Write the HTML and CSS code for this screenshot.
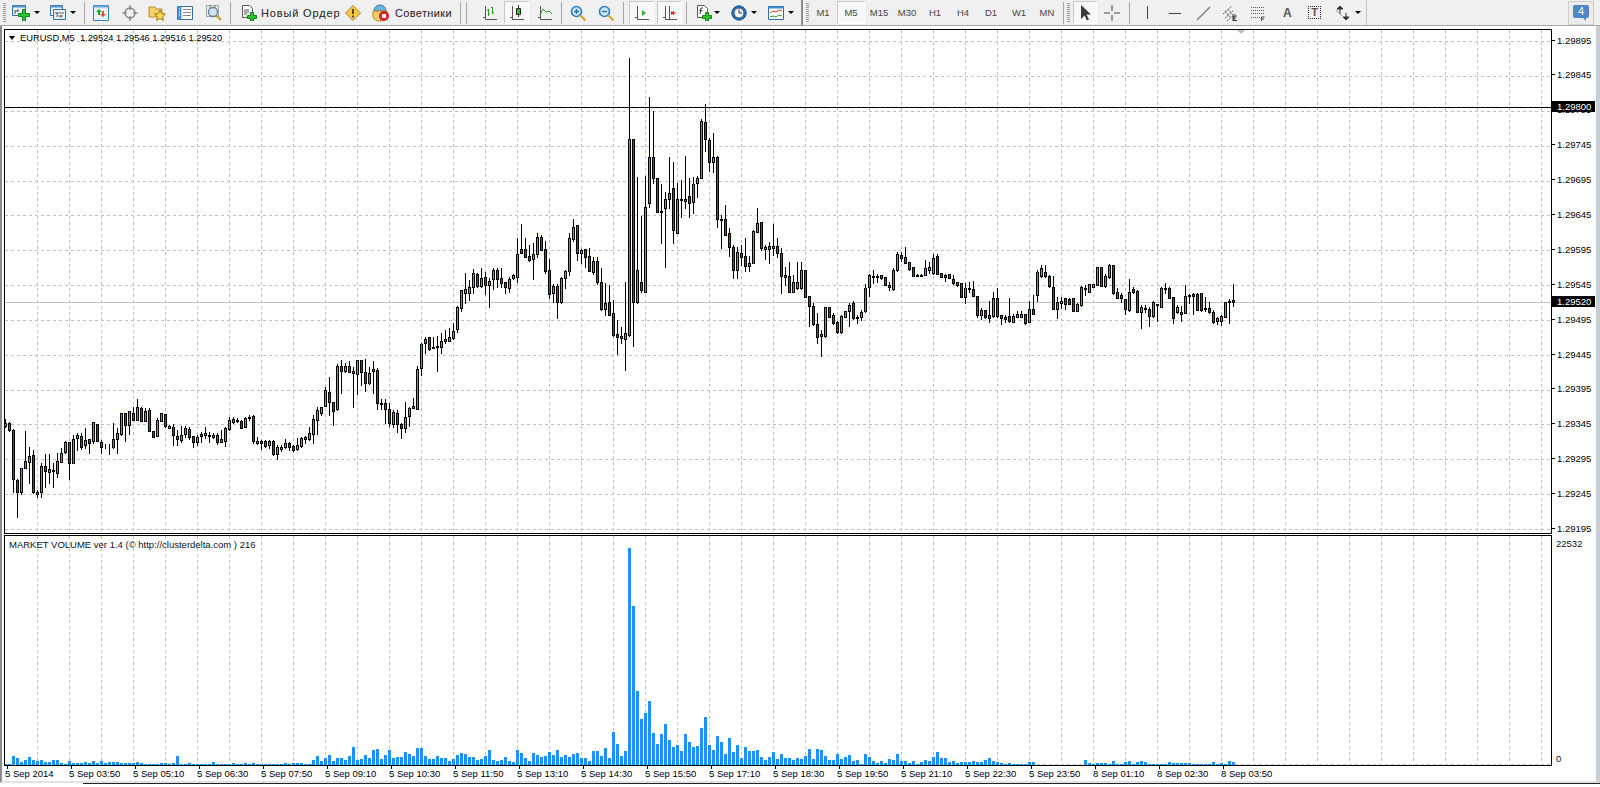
FILE: index.html
```html
<!DOCTYPE html>
<html lang="ru">
<head>
<meta charset="utf-8">
<title>EURUSD,M5</title>
<link rel="stylesheet" href="styles.css">
</head>
<body>
<header class="toolbar">
  <i class="grip at3"></i>
  <svg class="ic ml6" viewBox="0 0 18 18"><path d="M.5 1.500h13v10H.5z" fill="#e8f2fb" stroke="#2f6ea8"/><path d="M.5 1.500h13v2H.5z" fill="#4d94d0"/><path d="M3 6v4M6 5v3M3 7h3" stroke="#555" fill="none"/><path d="M6.500 9.500h4v-4h3v4h4v3h-4v4h-3v-4h-4z" fill="#2fc32f" stroke="#11801a"/></svg>
  <i class="caret ml4"></i>
  <svg class="ic ml9" viewBox="0 0 18 18"><path d="M1.500 1.500h12v10h-12z" fill="#eaf3fb" stroke="#2f6ea8"/><path d="M1.500 1.500h12v2h-12z" fill="#4d94d0"/><path d="M4.500 5.500h12v10h-12z" fill="#eaf3fb" stroke="#2f6ea8"/><path d="M6 9h9M7 12h7M8 8v3M12 11v3" stroke="#666" fill="none"/></svg>
  <i class="caret ml3"></i>
  <i class="sep ml8"></i>
  <svg class="ic16 ml8" viewBox="0 0 16 16"><path d="M.5.500h15v15H.5z" fill="#e6f0fa" stroke="#3a7fbd"/><path d="M.5.500h15v2H.5z" fill="#6aa8dc"/><path d="M6 4l3 3H7v3H5V7H3z" fill="#27a32b"/><path d="M10 12l-3-3h2V6h2v3h2z" fill="#e0522a"/></svg>
  <svg class="ic16 ml13" viewBox="0 0 16 16"><circle cx="8" cy="8" r="5" fill="none" stroke="#8a8a8a" stroke-width="1.500"/><path d="M8 0v5M8 11v5M0 8h5M11 8h5" stroke="#777" stroke-width="1.200"/></svg>
  <svg class="ic18 ml10" viewBox="0 0 18 18"><path d="M1 3h6l1 2h6v8H1z" fill="#f3d36e" stroke="#b58a2a"/><path d="M12 6l1.700 3.500 3.800.5-2.800 2.600.7 3.900-3.400-1.900-3.400 1.900.7-3.900L6.500 10l3.800-.5z" fill="#f7d64a" stroke="#9a7a20"/></svg>
  <svg class="ic16 ml11" viewBox="0 0 16 16"><path d="M.5 1.500h15v13H.5z" fill="#fff" stroke="#2f6ea8"/><path d="M.5 1.500h4v13h-4z" fill="#4d94d0"/><path d="M6 4.500h8M6 7.500h8M6 10.500h8" stroke="#888"/><path d="M2 4h1M2 7h1M2 10h1" stroke="#fff"/></svg>
  <svg class="ic18 ml12" viewBox="0 0 18 18"><path d="M1.500 1.500h12v11h-12z" fill="#eee" stroke="#9aa"/><circle cx="8" cy="8" r="4.500" fill="#cfe3f3" stroke="#6d7f92" stroke-width="1.300"/><path d="M11.500 11.500l4.500 4.500" stroke="#c99b2b" stroke-width="2.200"/><path d="M5 1v3M10 1v3" stroke="#777"/></svg>
  <i class="sep ml7"></i>
  <svg class="ic16 ml10" viewBox="0 0 16 16"><path d="M1.500.5h7l3 3v9h-10z" fill="#fff" stroke="#555"/><path d="M3 5h5M3 7h5M3 9h3" stroke="#555"/><path d="M6.500 10.500h3v-3h3v3h3v3h-3v2.500h-3v-2.500h-3z" fill="#2fc32f" stroke="#11801a"/></svg>
  <span class="tb-label tb-wide ml4 w-order">Новый Ордер</span>
  <svg class="ic16 ml10" viewBox="0 0 16 16"><path d="M8 .5L15.500 8 8 15.500.5 8z" fill="#f6c843" stroke="#a98a3a"/><path d="M8 4v5M8 10.500v2" stroke="#533" stroke-width="1.800"/></svg>
  <svg class="ic18 ml11" viewBox="0 0 18 18"><path d="M2 7c0-4 3-6 6-6s6 2 6 6z" fill="#6fb0de" stroke="#3d7aa8"/><path d="M1 7h14v6c0 2-3 4-7 4s-7-2-7-4z" fill="#f4cf63" stroke="#a98a3a"/><circle cx="12" cy="12" r="5" fill="#d92020"/><rect x="10" y="10" width="4" height="4" fill="#fff"/></svg>
  <span class="tb-label ml5 w-adv">Советники</span>
  <i class="sep ml7"></i><i class="sep ml5"></i>
  <svg class="ic16 ml15" viewBox="0 0 16 16"><path d="M3.500 1v13.500H15M1 12.500h3" stroke="#555" fill="none"/><path d="M6.500 4v7M6 10h1M10.500 2v7M9 2.500h1.500M10.500 8H12" stroke="#2a9a2a" fill="none"/><path d="M6.500 5H5M6.500 9H8" stroke="#2a9a2a"/></svg>
  <span class="press ml6"><svg class="ic16" viewBox="0 0 16 16"><path d="M3.500 1v13.500H15M1 12.500h3" stroke="#555" fill="none"/><path d="M9.500 0v12" stroke="#333"/><path d="M7.500 3.500h4v6h-4z" fill="#2fc32f" stroke="#222"/></svg></span>
  <svg class="ic16 ml8" viewBox="0 0 16 16"><path d="M3.500 1v13.500H15M1 12.500h3" stroke="#555" fill="none"/><path d="M3 10l3-6 3 3 3-1 3 3" stroke="#2a9a2a" fill="none"/></svg>
  <i class="sep ml8"></i>
  <svg class="ic16 ml8" viewBox="0 0 16 16"><circle cx="6.500" cy="6.500" r="5" fill="#cfe6f7" stroke="#2d7fc0" stroke-width="1.600"/><path d="M4 6.500h5M6.500 4v5" stroke="#2b70b0" stroke-width="1.500"/><path d="M10.500 10.500l5 5" stroke="#d6a92d" stroke-width="2.400"/></svg>
  <svg class="ic16 ml12" viewBox="0 0 16 16"><circle cx="6.500" cy="6.500" r="5" fill="#cfe6f7" stroke="#2d7fc0" stroke-width="1.600"/><path d="M4 6.500h5" stroke="#2b70b0" stroke-width="1.500"/><path d="M10.500 10.500l5 5" stroke="#d6a92d" stroke-width="2.400"/></svg>
  <i class="sep ml9"></i>
  <span class="press ml5"><svg class="ic16" viewBox="0 0 16 16"><path d="M3.500 1v13.500H15M1 12.500h3" stroke="#555" fill="none"/><path d="M8 5v6l4-3z" fill="#2fae2f"/></svg></span>
  <span class="press ml3"><svg class="ic16" viewBox="0 0 16 16"><path d="M3.500 1v13.500H15M1 12.500h3M7.500 1v13" stroke="#555" fill="none"/><path d="M14 8H10M11.500 6v4" stroke="#d22" fill="none"/><path d="M9 6l3 2-3 2z" fill="#d22"/></svg></span>
  <i class="sep ml4"></i>
  <svg class="ic16 ml9" viewBox="0 0 16 16"><path d="M1.500.5h7l3 3v9h-10z" fill="#fff" stroke="#555"/><path d="M4 9l1-6h2M3.500 5.500h3" stroke="#333" fill="none"/><path d="M6.500 10.500h3v-3h3v3h3v3h-3v2.500h-3v-2.500h-3z" fill="#2fc32f" stroke="#11801a"/></svg>
  <i class="caret ml2"></i>
  <svg class="ic16 ml11" viewBox="0 0 16 16"><circle cx="8" cy="8" r="7.200" fill="#1f6fb8" stroke="#17568f"/><circle cx="8" cy="8" r="4.800" fill="#f4f4f4" stroke="#444" stroke-width=".6"/><path d="M8 4.500V8h3" stroke="#333" fill="none"/></svg>
  <i class="caret ml4"></i>
  <svg class="ic16 ml11" viewBox="0 0 16 16"><path d="M.5 1.500h15v13H.5z" fill="#fff" stroke="#2f6ea8"/><path d="M.5 1.500h15v2H.5z" fill="#3d8ccc"/><path d="M2 8l3-2 3 1 3-2 3 1" stroke="#d2402a" fill="none"/><path d="M2 12l3-1 3 1 3-2 3 1" stroke="#2fa52f" fill="none"/></svg>
  <i class="caret ml4"></i>
  <i class="sep sep-thick ml7"></i>
  <i class="grip ml3"></i>
  <nav class="periods">
    <span class="period">M1</span><span class="period on">M5</span><span class="period">M15</span><span class="period">M30</span><span class="period">H1</span><span class="period">H4</span><span class="period">D1</span><span class="period">W1</span><span class="period">MN</span>
  </nav>
  <i class="sep ml2"></i>
  <i class="grip ml3"></i>
  <span class="press press-wide ml3"><svg class="ic16" viewBox="0 0 16 16"><path d="M4 0v14l3.500-3.500 2.500 5 2-1-2.500-5H14z" fill="#3a3a3a"/></svg></span>
  <svg class="ic16 ml7" viewBox="0 0 16 16"><path d="M8 0v6M8 10v6M0 8h6M10 8h6" stroke="#444"/></svg>
  <i class="sep ml9"></i>
  <svg class="ic16 ml9" viewBox="0 0 16 16"><path d="M8.500 1v13" stroke="#444"/></svg>
  <svg class="ic16 ml12" viewBox="0 0 16 16"><path d="M2 8.500h12" stroke="#444"/></svg>
  <svg class="ic16 ml12" viewBox="0 0 16 16"><path d="M2 15L15 2" stroke="#777" stroke-width="1.200"/></svg>
  <svg class="ic16 ml11" viewBox="0 0 16 16"><path d="M1 9l9-8M3 13l9-8M5 16l9-8M3 6l5 6M6 4l5 6" stroke="#555" stroke-dasharray="2 1" fill="none"/><path d="M11 11h1v5h-1zM11 11h4M11 13h3M11 15.500h4" stroke="#333" fill="none"/></svg>
  <svg class="ic16 ml12" viewBox="0 0 16 16"><path d="M1 2.500h13M1 5.500h13M1 8.500h13M1 12.500h9" stroke="#555" stroke-dasharray="1 1"/><path d="M11.500 16v-4h3M11.500 14h2.500" stroke="#444" fill="none"/></svg>
  <span class="glyph ml17">A</span>
  <span class="textbox ml17">T</span>
  <svg class="ic16 ml14" viewBox="0 0 16 16"><path d="M5 1l3 3H2zM5 9V4M11 15l-3-3h6zM11 8v4" fill="#333" stroke="#333"/><path d="M1 5l6 6" stroke="#999"/></svg>
  <i class="caret ml4"></i>
  <i class="sep sep-light ml5"></i>
  <span class="notify"><span class="bubble">4</span></span>
</header>

<main class="terminal">
  <section class="row">
    <div class="pane pane-price">
      <svg id="price" class="plot plot-price" viewBox="5 30 1546 503"></svg>
      <div class="pane-title"><i class="menu-arrow"></i>EURUSD,M5&nbsp; 1.29524 1.29546 1.29516 1.29520</div>
      <i class="shift-mark"></i>
    </div>
    <div class="scale scale-price">
      <span class="level">1.29895</span><span class="level">1.29845</span><span class="level">1.29795</span><span class="level">1.29745</span><span class="level">1.29695</span><span class="level">1.29645</span><span class="level">1.29595</span><span class="level">1.29545</span><span class="level">1.29495</span><span class="level">1.29445</span><span class="level">1.29395</span><span class="level">1.29345</span><span class="level">1.29295</span><span class="level">1.29245</span><span class="level">1.29195</span>
      <b class="tag tag-line">1.29800</b>
      <b class="tag tag-bid">1.29520</b>
    </div>
  </section>
  <section class="row row-volume">
    <div class="pane pane-volume">
      <svg id="volume" class="plot plot-volume" viewBox="5 536 1546 229"></svg>
      <div class="pane-title pane-title-sub">MARKET VOLUME ver 1.4 (© http://clusterdelta.com ) 216</div>
    </div>
    <div class="scale scale-volume">
      <span class="vol">22532</span>
      <span class="vol">0</span>
    </div>
  </section>
  <footer class="time-axis">
    <span>5 Sep 2014</span><span>5 Sep 03:50</span><span>5 Sep 05:10</span><span>5 Sep 06:30</span><span>5 Sep 07:50</span><span>5 Sep 09:10</span><span>5 Sep 10:30</span><span>5 Sep 11:50</span><span>5 Sep 13:10</span><span>5 Sep 14:30</span><span>5 Sep 15:50</span><span>5 Sep 17:10</span><span>5 Sep 18:30</span><span>5 Sep 19:50</span><span>5 Sep 21:10</span><span>5 Sep 22:30</span><span>5 Sep 23:50</span><span>8 Sep 01:10</span><span>8 Sep 02:30</span><span>8 Sep 03:50</span>
  </footer>
</main>
<div class="tabs-edge"></div>
<script src="script.js"></script>
</body>
</html>
```
FILE: styles.css
```css
* { box-sizing: border-box; }
html, body { margin: 0; padding: 0; }
body {
  width: 1600px;
  height: 787px;
  overflow: hidden;
  background: #fff;
  color: #000;
  font: 9.500px "Liberation Sans", Arial, sans-serif;
}
i { display: block; font-style: normal; flex: none; }

/* toolbar */
.toolbar {
  display: flex;
  align-items: center;
  height: 26px;
  background: #f0f0f0;
  border-bottom: 1px solid #a8a8a8;
  white-space: nowrap;
}
.toolbar svg { flex: none; display: block; }
.ic { width: 18px; height: 18px; }
.ic16 { width: 16px; height: 16px; }
.ic18 { width: 18px; height: 18px; }
.grip {
  width: 3px;
  height: 20px;
  background: repeating-linear-gradient(#9a9a9a 0 1px, #f0f0f0 1px 2px);
}
.at3 { margin-left: 3px; }
.caret {
  width: 6px;
  height: 0;
  border: 3px solid transparent;
  border-top: 3px solid #000;
  border-bottom: 0;
}
.sep { width: 1px; height: 22px; background: #a6a6a6; }
.sep-thick { width: 2px; height: 25px; background: #8e8e8e; }
.sep-light { height: 25px; background: #c4c4c4; }
.tb-label { font-size: 11px; letter-spacing: .35px; color: #222; }
.tb-wide { letter-spacing: .85px; }
.w-order { width: 74px; }
.w-adv { width: 58px; }
.press {
  display: flex;
  align-items: center;
  justify-content: center;
  flex: none;
  width: 25px;
  height: 23px;
  border: 1px solid #c8c8c8;
  border-bottom-color: #fff;
  border-right-color: #fff;
  background: #f8f8f8;
}
.press-wide { width: 24px; }
.periods { display: flex; flex: none; }
.period {
  display: flex;
  align-items: center;
  justify-content: center;
  width: 28px;
  height: 23px;
  font-size: 9.500px;
  color: #444;
}
.period.on {
  border: 1px solid #c8c8c8;
  border-bottom-color: #fff;
  border-right-color: #fff;
  background: #f8f8f8;
}
.glyph { flex: none; font: bold 12px "Liberation Sans", sans-serif; color: #555; width: 8px; }
.textbox {
  flex: none;
  width: 13px;
  height: 13px;
  border: 1px dotted #222;
  font: bold 11px/11px "Liberation Sans", sans-serif;
  color: #555;
  text-align: center;
}
.notify {
  display: flex;
  align-items: center;
  justify-content: center;
  flex: none;
  width: 26px;
  height: 24px;
  margin-left: auto;
  margin-right: 6px;
  border: 1px solid #cfcfcf;
  background: #ececec;
}
.bubble {
  position: relative;
  width: 16px;
  height: 13px;
  margin-top: -3px;
  border-radius: 2px;
  background: #4f86c6;
  color: #fff;
  font: 11px/13px "Liberation Sans", sans-serif;
  text-align: center;
}
.bubble::after {
  content: "";
  position: absolute;
  right: 3px;
  bottom: -3px;
  border-top: 3px solid #4f86c6;
  border-left: 3px solid transparent;
}
.ml2 { margin-left: 2px; } .ml3 { margin-left: 3px; } .ml4 { margin-left: 4px; }
.ml5 { margin-left: 5px; } .ml6 { margin-left: 6px; } .ml7 { margin-left: 7px; }
.ml8 { margin-left: 8px; } .ml9 { margin-left: 9px; } .ml10 { margin-left: 10px; }
.ml11 { margin-left: 11px; } .ml12 { margin-left: 12px; } .ml13 { margin-left: 13px; }
.ml14 { margin-left: 14px; } .ml15 { margin-left: 15px; } .ml17 { margin-left: 17px; }

/* terminal body */
.terminal {
  height: 757px;
  padding: 3px 0 0 2px;
  border-left: 2px solid #8c8c8c;
  border-right: 4px solid #c6ced6;
  border-bottom: 2px solid #e2e2e2;
}
.row { display: flex; height: 505px; }
.row-volume { height: 231px; margin-top: 1px; }
.pane {
  position: relative;
  flex: none;
  width: 1548px;
  border: 1px solid #000;
}
.plot { display: block; width: 1546px; }
.plot-price { height: 503px; }
.plot-volume { height: 229px; }
.pane-title {
  position: absolute;
  left: 15px;
  top: 2px;
  display: flex;
  align-items: center;
  height: 12px;
  font-size: 9.300px;
  white-space: pre;
}
.menu-arrow {
  width: 0;
  height: 0;
  margin-left: -11px;
  margin-right: 5px;
  border: 3.500px solid transparent;
  border-top: 4px solid #000;
  border-bottom: 0;
}
.pane-title-sub { left: 4px; top: 2px; font-size: 9.500px; color: #112; }
.shift-mark {
  position: absolute;
  left: 1232px;
  top: 0;
  width: 0;
  height: 0;
  border: 4px solid transparent;
  border-top: 4px solid #bdbdbd;
  border-bottom: 0;
}

/* price scale */
.scale { position: relative; flex: 1; font-size: 9.500px; }
.scale-price { padding-top: 5px; }
.level {
  display: flex;
  align-items: center;
  height: 12px;
  margin-bottom: 22.900px;
  white-space: nowrap;
}
.level::before {
  content: "";
  width: 3px;
  height: 1px;
  margin-right: 2px;
  background: #000;
}
.tag {
  position: absolute;
  left: 0;
  width: 43px;
  height: 11px;
  padding-left: 5px;
  background: #000;
  color: #fff;
  font-weight: normal;
  line-height: 11px;
}
.tag-line { top: 72px; }
.tag-bid { top: 267px; }
.scale-volume {
  display: flex;
  flex-direction: column;
  justify-content: space-between;
  padding: 3px 0 2px 4px;
  color: #112;
}

/* time axis */
.time-axis {
  display: flex;
  padding-left: 3px;
  margin-top: -1px;
}
.time-axis span {
  position: relative;
  flex: none;
  width: 64px;
  padding-top: 3px;
  line-height: 12px;
  white-space: nowrap;
  text-indent: -2px;
}
.time-axis span::before {
  content: "";
  position: absolute;
  left: 0;
  top: 0;
  width: 1px;
  height: 4px;
  background: #000;
}
.tabs-edge {
  height: 2px;
  margin-left: 83px;
  border-top: 1px solid #222;
}
```
FILE: script.js
```js
// high top bottom low colour(1 up / 0 down), one candle per 5 minutes
var C = "419 423 426 427 1|422 423 430 431 0|429 430 479 492 0|479 480 492 517 0|468 468 492 494 1|431 461 468 468 1|447 456 462 483 1|450 455 492 493 0|490 492 494 497 1|463 466 492 497 1|454 466 471 487 0|454 469 472 483 1|463 470 471 487 1|453 461 473 477 1|448 453 462 462 1|441 442 452 453 1|442 442 463 479 0|435 439 463 463 1|433 435 438 450 1|433 436 447 449 0|428 440 445 448 1|439 439 443 453 0|422 422 441 443 1|424 424 441 441 0|440 442 447 453 0|444 447 447 448 1|444 447 447 454 1|423 439 447 448 1|428 433 439 453 1|413 413 434 435 1|413 413 425 441 0|411 411 425 434 1|407 413 420 420 0|399 407 420 420 1|407 408 421 421 0|408 411 421 421 1|408 410 431 431 0|431 431 437 437 0|418 420 436 436 1|413 413 421 421 1|414 414 426 427 0|425 426 428 428 1|424 427 435 445 0|430 436 439 445 0|426 435 440 442 1|426 428 434 437 1|427 429 437 439 0|436 436 442 447 0|435 437 442 445 1|432 434 436 442 1|427 433 435 438 1|432 435 436 442 1|433 435 437 438 1|433 435 442 444 0|430 439 442 442 1|427 428 441 446 1|417 420 429 430 1|417 419 422 423 1|418 420 421 422 1|420 421 428 428 0|417 418 427 427 1|415 417 418 420 1|415 416 441 443 0|437 441 443 444 1|440 441 443 449 0|440 441 446 447 0|440 441 445 448 1|440 441 454 455 0|445 447 454 459 1|445 447 449 451 1|439 443 447 448 1|442 443 447 450 0|445 446 450 451 0|438 445 449 450 1|437 438 446 447 1|436 437 439 443 1|427 433 439 440 1|415 419 434 443 1|407 410 420 434 1|407 407 413 415 1|387 390 406 406 1|377 392 402 415 0|402 402 411 425 0|364 366 409 410 1|360 366 371 393 0|363 366 371 372 1|361 366 372 372 0|367 371 373 407 1|360 360 374 394 1|360 360 372 385 0|359 372 383 391 0|367 373 383 384 1|361 369 371 393 1|368 370 403 409 0|399 403 404 409 1|399 403 409 423 0|403 409 423 426 0|410 412 424 427 1|410 413 424 432 0|423 424 428 438 0|402 417 428 432 1|407 408 416 426 1|398 406 408 408 1|366 369 409 409 1|343 344 368 375 1|337 339 343 353 1|337 337 349 350 0|337 347 348 348 1|336 346 347 371 1|333 341 347 353 1|330 339 341 343 1|328 337 341 341 1|323 331 338 339 1|306 307 329 332 1|290 290 308 311 1|273 289 293 303 1|280 287 293 300 1|269 273 287 293 1|273 274 286 287 0|268 278 286 287 1|272 277 285 294 0|278 281 285 307 1|268 270 279 289 1|268 270 279 287 0|268 278 283 287 0|282 282 287 293 0|277 279 288 292 1|274 275 278 279 1|238 254 277 282 1|224 249 253 253 0|238 249 257 257 0|245 256 260 261 0|243 254 259 279 1|233 237 254 257 1|235 237 250 250 0|241 249 271 273 0|259 270 294 298 0|284 286 293 302 1|284 286 302 318 0|277 278 302 303 1|270 271 278 288 1|233 238 271 275 1|219 227 239 241 1|225 225 253 260 0|249 250 253 263 1|249 249 257 267 0|248 256 271 271 0|257 261 272 274 1|257 261 282 284 0|268 282 309 310 0|283 303 309 315 1|285 302 315 315 0|300 313 335 336 0|320 334 337 354 0|327 336 338 343 1|282 333 339 370 1|58 139 335 336 1|139 139 302 346 0|177 270 302 303 1|216 282 290 292 0|176 207 292 292 1|97 157 203 207 1|111 157 178 183 0|178 178 212 212 0|184 211 212 243 1|192 199 208 267 1|157 193 199 208 1|162 188 230 243 0|183 199 233 233 1|180 199 200 217 1|156 199 201 208 1|178 196 203 217 0|177 184 202 213 1|176 178 183 197 1|119 121 178 178 1|104 122 139 151 0|138 140 162 171 0|133 157 162 172 1|156 157 219 227 0|215 219 220 248 1|205 219 235 235 0|228 233 247 256 0|245 247 270 278 0|247 252 270 278 1|245 253 257 265 0|238 256 266 271 0|256 263 266 271 1|230 231 263 263 1|208 223 232 232 1|222 222 248 250 0|245 247 249 259 1|242 246 249 263 1|224 246 248 255 1|238 246 253 257 0|248 253 276 293 0|267 275 277 285 1|262 276 292 292 0|275 282 292 292 1|262 282 288 289 1|262 270 288 289 1|270 270 297 297 0|296 296 306 326 0|303 306 324 325 0|313 324 337 343 0|330 334 336 356 1|307 307 336 337 1|307 307 317 317 0|313 315 323 324 0|321 322 332 333 0|315 316 332 333 1|311 311 317 317 1|303 305 311 326 1|301 303 318 319 0|315 317 318 323 1|310 312 317 320 1|284 288 311 312 1|274 275 287 296 1|270 276 277 283 1|274 276 277 282 1|275 275 278 279 0|277 277 285 285 0|282 285 287 290 1|268 270 289 290 1|252 254 270 271 1|252 255 258 261 0|247 257 263 263 0|262 262 269 270 0|267 267 276 276 0|274 275 276 276 1|274 275 276 276 1|260 268 275 275 1|262 267 270 273 1|254 258 273 274 1|254 256 274 274 0|273 273 277 277 0|274 275 277 281 0|274 274 278 278 0|275 279 283 284 0|282 282 285 286 0|283 283 297 297 0|283 288 297 303 1|282 288 289 292 1|281 289 296 296 0|296 296 315 317 0|308 310 315 319 1|310 310 317 318 0|301 315 318 322 0|292 298 316 317 1|288 298 316 317 0|315 315 318 324 0|315 317 319 322 0|298 316 321 322 0|314 316 322 322 1|311 314 317 317 1|311 314 317 317 1|314 314 323 324 0|301 309 322 322 1|295 309 314 314 0|270 272 295 301 1|265 268 276 277 1|265 272 276 277 0|275 276 286 287 0|276 287 309 309 0|297 302 309 318 1|297 301 303 308 1|298 298 304 309 0|298 299 304 304 0|298 298 311 311 0|303 304 311 311 1|286 287 305 306 1|285 288 289 295 1|284 284 292 292 1|284 284 287 287 1|267 267 285 285 1|267 267 286 286 0|274 276 286 287 1|264 265 277 278 1|265 265 293 294 0|288 292 298 298 0|293 295 298 302 0|299 299 309 314 0|279 292 310 311 1|287 289 292 293 0|290 291 312 312 0|305 307 312 328 1|305 308 309 312 0|307 309 316 326 0|301 302 316 317 1|304 304 305 321 1|287 288 307 307 1|283 288 289 293 1|287 288 298 298 0|297 297 318 323 0|305 307 312 313 1|306 312 314 321 1|285 296 313 313 1|294 295 296 303 1|293 294 296 314 0|293 294 310 310 0|293 293 310 311 0|297 308 309 311 1|302 308 312 313 0|310 312 322 323 0|317 318 321 324 1|315 316 321 325 1|302 302 317 317 1|299 301 302 323 1|284 300 302 306 0";

var V = [1,1,9,7,3,5,8,5,4,5,3,3,5,5,2,1,4,2,2,2,3,2,4,2,4,2,3,3,3,2,2,2,2,3,2,1,1,1,1,2,2,1,2,9,1,1,2,1,1,1,1,1,3,1,1,1,1,2,1,1,2,1,2,1,1,1,1,1,1,1,2,1,2,2,2,1,1,5,9,4,7,10,4,7,7,5,9,18,5,6,10,7,15,16,6,10,15,7,8,8,13,11,9,17,17,9,6,6,9,7,7,4,6,10,12,11,8,8,5,6,9,15,5,4,5,8,4,3,15,12,7,4,12,10,8,9,13,10,15,8,10,8,11,12,7,7,4,14,14,9,17,7,33,21,9,14,217,159,74,46,52,64,32,21,31,41,25,18,20,14,31,23,18,19,37,48,20,15,29,23,11,27,13,20,7,18,14,14,15,8,5,8,13,6,11,7,7,5,7,6,9,16,6,16,15,9,5,5,11,6,8,10,4,5,1,11,8,4,2,4,2,6,5,11,4,4,2,4,1,3,5,4,8,13,7,7,3,4,2,3,3,3,4,3,3,5,7,4,3,2,1,2,1,1,1,1,3,3,0,0,0,0,0,0,0,0,0,0,0,0,5,2,1,2,2,2,1,4,1,1,3,4,1,3,4,3,1,1,1,1,1,3,2,2,2,2,2,1,1,1,1,1,3,1,2,1,4,3];

var HGRID = [41,76,111,146,181,215,250,285,320,355,390,424,459,494,529];
var DASH = ".grid{stroke:#c0c0c0;stroke-dasharray:3 3}";

function line(x1, y1, x2, y2, cls) {
  return '<line x1="' + x1 + '" y1="' + y1 + '" x2="' + x2 + '" y2="' + y2 + '" class="' + cls + '"/>';
}
function vgrid(y1, y2) {
  var s = "";
  for (var x = 37; x < 1551; x += 32) s += line(x + .5, y1, x + .5, y2, "grid");
  return s;
}

var p = '<style>' + DASH + '.bid{stroke:#c0c0c0}.w{stroke:#000}.lvl{stroke:#000}.b{stroke:#000}</style><g shape-rendering="crispEdges">';
HGRID.forEach(function (y) { p += line(5, y + .5, 1551, y + .5, "grid"); });
p += vgrid(30, 533);
p += line(5, 302.5, 1551, 302.5, "bid");
C.split("|").forEach(function (row, k) {
  var d = row.split(" ").map(Number), x = 5 + 4 * k;
  p += line(x + .5, d[0], x + .5, d[3] + 1, "w");
  var h = d[2] - d[1];
  if (h > 0) {
    p += '<rect x="' + (x - .5) + '" y="' + (d[1] + .5) + '" width="2" height="' + h + '" fill="' + (d[4] ? "#2fc72f" : "#e81010") + '" class="b"/>';
  }
});
p += line(5, 107.5, 1551, 107.5, "lvl");
document.getElementById("price").innerHTML = p + "</g>";

var v = '<style>' + DASH + '</style><g shape-rendering="crispEdges">';
v += vgrid(536, 765) + line(5, 764.5, 1551, 764.5, "grid");
V.forEach(function (h, k) {
  if (h) v += '<rect x="' + (4 + 4 * k) + '" y="' + (765 - h) + '" width="3" height="' + h + '" fill="#1e90ff"/>';
});
document.getElementById("volume").innerHTML = v + "</g>";
```
